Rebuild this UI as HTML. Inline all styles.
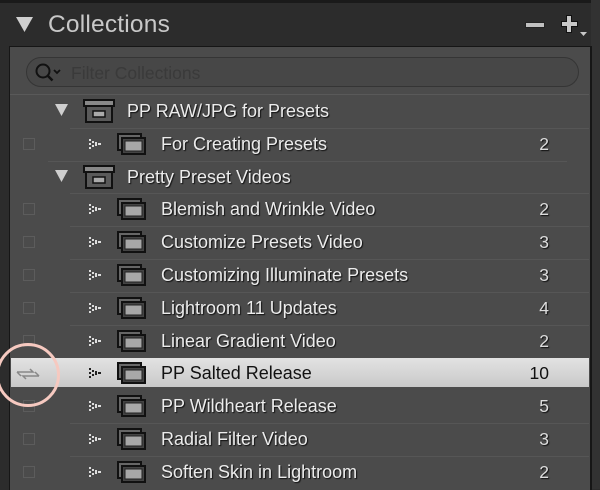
<!DOCTYPE html>
<html><head><style>
body{margin:0;width:600px;height:489px;overflow:hidden;background:#2c2c2c;font-family:"Liberation Sans","DejaVu Sans",sans-serif;position:relative}
.a{position:absolute}
.top{left:0;top:0;width:600px;height:3px;background:#1a1a1a}
.hdr{left:48px;top:11px;font-size:24.5px;color:#c8c8c8;letter-spacing:0.2px}
.panel{left:9px;top:46px;width:580px;height:443px;background:#4b4b4b;border-left:1px solid #161616;border-top:1px solid #161616;border-right:2px solid #161616}
.rs{left:591px;top:0;width:9px;height:489px;background:#323232}
.search{left:26px;top:57px;width:551px;height:28px;border:1px solid #353535;border-radius:15px;background:#474747}
.sep{height:1px;background:#565656}
.t{font-size:18px;color:#ececec;text-shadow:1px 1px 1px #111;white-space:nowrap}
.n{font-size:17.5px;color:#dcdcdc;text-shadow:1px 1px 1px #111;width:40px;text-align:right;left:509px}
.cb{left:23px;width:10px;height:10px;border:1px solid #5c5c5c}
</style></head><body>
<div class="a top"></div>
<div class="a rs"></div>
<svg class="a" style="left:16px;top:17px" width="18" height="16"><polygon points="0,0 17,0 8.5,15" fill="#cfcfcf"/></svg>
<div class="a hdr">Collections</div>
<div class="a" style="left:525px;top:22px;width:18px;height:4px;background:#c0c0c0;border:1px solid #222"></div>
<svg class="a" style="left:560px;top:14px" width="30" height="24"><path d="M9 1v18M1 10h17" stroke="#111" stroke-width="6"/><path d="M9 2v16M2 10h15" stroke="#c8c8c8" stroke-width="4"/><polygon points="20,18 27,18 23.5,22" fill="#c8c8c8"/></svg>
<div class="a panel"></div>
<div class="a search"></div>
<svg class="a" style="left:34px;top:62px" width="30" height="22"><circle cx="9" cy="9" r="6.5" fill="none" stroke="#111" stroke-width="2"/><path d="M13.5 13.5l5 5" stroke="#111" stroke-width="2.5"/><path d="M20 8l3 3 3-3" fill="none" stroke="#111" stroke-width="1.8"/></svg>
<div class="a" style="left:71px;top:63px;font-size:17.5px;color:#3a3a3a">Filter Collections</div>
<div class="a sep" style="left:10px;top:94px;width:579px;background:#595959"></div>

<div id="rows"></div>
<script>
const rows=[
[1,"PP RAW/JPG for Presets",""],
[0,"For Creating Presets","2"],
[1,"Pretty Preset Videos",""],
[0,"Blemish and Wrinkle Video","2"],
[0,"Customize Presets Video","3"],
[0,"Customizing Illuminate Presets","3"],
[0,"Lightroom 11 Updates","4"],
[0,"Linear Gradient Video","2"],
[2,"PP Salted Release","10"],
[0,"PP Wildheart Release","5"],
[0,"Radial Filter Video","3"],
[0,"Soften Skin in Lightroom","2"]];
let h="";
rows.forEach((r,i)=>{
 const c=111+i*32.8, top=c-16;
 if(r[0]==2){h+=`<div class="a" style="left:11px;top:${top+1}px;width:578px;height:29px;background:linear-gradient(#e2e2e2,#c9c9c9)"></div>`;}
 if(i>0 && r[0]!=2 && rows[i-1][0]!=2){h+=`<div class="a sep" style="left:${r[0]==1?48:70}px;top:${top}px;width:519px"></div>`;}
 if(r[0]==1){
  h+=`<svg class="a" style="left:55px;top:${c-7}px" width="14" height="13"><polygon points="0,0 13,0 6.5,12" fill="#cfcfcf"/></svg>`;
  h+=`<svg class="a" style="left:83px;top:${c-12}px" width="32" height="24"><rect x="1" y="1" width="30" height="6" fill="#888" stroke="#111" stroke-width="2"/><rect x="3" y="7" width="26" height="16" fill="#5a5a5a" stroke="#111" stroke-width="2"/><rect x="10" y="12" width="12" height="6" fill="#aaa" stroke="#111" stroke-width="1.5"/></svg>`;
  h+=`<div class="a t" style="left:127px;top:${c-10}px">${r[1]}</div>`;
 } else {
  const sel=r[0]==2;
  if(!sel) h+=`<div class="a cb" style="top:${c-6}px"></div>`;
  h+=`<svg class="a" style="left:89px;top:${c-5}px" width="14" height="10"><g fill="${sel?'#222':'#ddd'}"><rect x="0" y="0" width="2" height="2"/><rect x="0" y="4" width="2" height="2"/><rect x="0" y="8" width="2" height="2"/><rect x="3" y="2" width="2" height="2"/><rect x="3" y="6" width="2" height="2"/><rect x="6" y="3" width="2" height="2"/><rect x="6" y="5" width="2" height="2"/><rect x="9" y="4" width="3" height="2"/></g></svg>`;
  h+=`<svg class="a" style="left:117px;top:${c-11}px" width="30" height="22"><rect x="1" y="1" width="23" height="16" fill="#666" stroke="#111" stroke-width="2"/><rect x="5" y="5" width="23" height="16" fill="#444" stroke="#111" stroke-width="2"/><rect x="8" y="8" width="17" height="10" fill="#a8a8a8" stroke="#222" stroke-width="1"/></svg>`;
  h+=`<div class="a t" style="left:161px;top:${c-10}px;${sel?'color:#111;text-shadow:none':''}">${r[1]}</div>`;
  h+=`<div class="a n" style="top:${c-10}px;${sel?'color:#111;text-shadow:none':''}">${r[2]}</div>`;
 }
});
document.getElementById("rows").innerHTML=h;
</script>
<svg class="a" style="left:15px;top:367px" width="26" height="14"><path d="M2 5h16l-3-3M24 9H8l3 3M2 5l4 4M24 9l-4-4" fill="none" stroke="#888" stroke-width="1.5"/></svg>
<div class="a" style="left:-4px;top:343px;width:64px;height:64px;border:3.5px solid #f6c9c0;border-radius:50%;box-sizing:border-box"></div>
</body></html>
